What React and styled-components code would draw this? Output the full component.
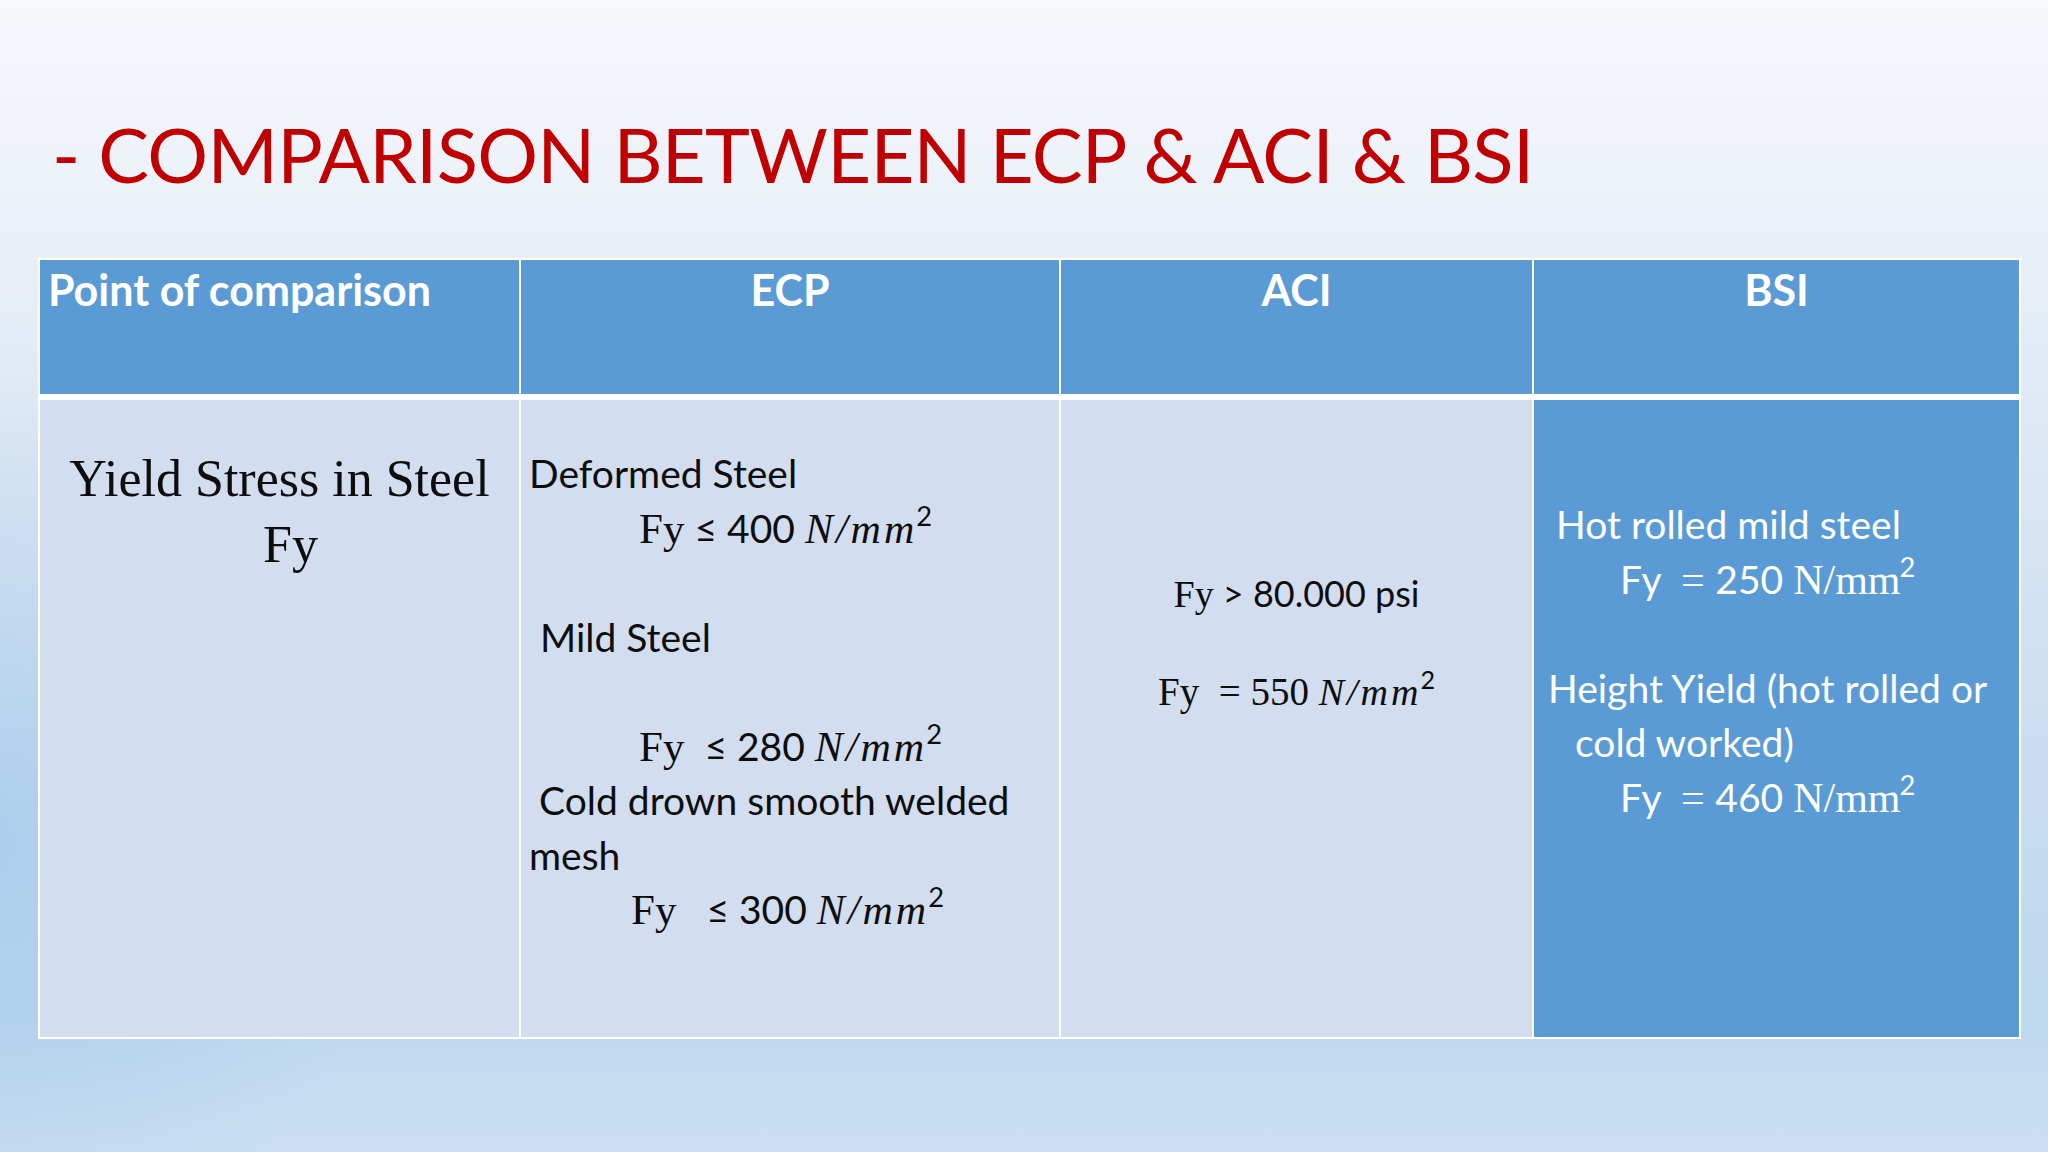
import React from 'react';
import styled, { createGlobalStyle } from 'styled-components';

const Colors = {
  title: '#C00000',
  header: '#5B9BD5',
  cell: '#D2DEEF',
  white: '#fff',
  ink: '#0d0d0d',
};

const Sans = `'Lato', 'Liberation Sans', sans-serif`;
const Serif = `'Liberation Serif', 'DejaVu Serif', serif`;

const GlobalStyle = createGlobalStyle`
  html, body {
    margin: 0;
    padding: 0;
  }
  body {
    background: #dfe9f5;
  }
`;

const Slide = styled.div`
  width: 2048px;
  height: 1152px;
  box-sizing: border-box;
  overflow: hidden;
  display: flex;
  flex-direction: column;
  padding: 116px 0 0 38px;
  background:
    radial-gradient(ellipse 520px 620px at 0% 72%, rgba(150, 194, 232, 0.5), rgba(150, 194, 232, 0) 75%),
    linear-gradient(180deg, #f6f8fc 0%, #eef3f9 14%, #e4ecf6 28%, #d3e2f2 52%, #c3daef 76%, #bed8ee 88%, #cbdff2 100%);
`;

const Title = styled.h1`
  margin: 0 0 66px 14px;
  font-family: ${Sans};
  font-weight: 400;
  font-size: 76px;
  line-height: 76px;
  letter-spacing: -0.7px;
  color: ${Colors.title};
  white-space: nowrap;
`;

const Table = styled.div`
  display: grid;
  grid-template-columns: 479px 538px 471px 485px;
  grid-template-rows: 134px 637px;
  column-gap: 2px;
  row-gap: 6px;
  padding: 2px;
  background: ${Colors.white};
  width: max-content;
`;

const HeadCell = styled.div`
  background: ${Colors.header};
  color: ${Colors.white};
  font-family: ${Sans};
  font-weight: 700;
  font-size: 43px;
  line-height: 48px;
  padding: 6px 8px 0;
  text-align: ${p => p.$align || 'center'};
`;

const BodyCell = styled.div`
  background: ${p => (p.$accent ? Colors.header : Colors.cell)};
  color: ${p => (p.$accent ? Colors.white : Colors.ink)};
  font-family: ${p => (p.$serif ? Serif : Sans)};
  font-size: ${p => p.$size || 39}px;
  padding-top: ${p => p.$top || 0}px;
  text-align: ${p => p.$align || 'left'};
`;

const Line = styled.div`
  height: ${p => p.$h || 54.5}px;
  line-height: ${p => p.$h || 54.5}px;
  padding-left: ${p => p.$indent || 0}px;
  white-space: pre;
`;

const Rm = styled.span`
  font-family: ${Serif};
  font-size: ${p => p.$size || 43}px;
`;

const Var = styled.span`
  font-family: ${Serif};
  font-style: italic;
  font-size: ${p => p.$size || 42}px;
  letter-spacing: 3px;
`;

const Sup = styled.sup`
  font-family: ${Sans};
  font-size: 0.7em;
  line-height: 0;
  vertical-align: 0.62em;
  margin-left: -1px;
`;

const headers = [
  { text: 'Point of comparison', align: 'left' },
  { text: 'ECP' },
  { text: 'ACI' },
  { text: 'BSI' },
];

// "Fy ≤ 400 N/mm²" as drawn by the slide's equation editor
const Limit = ({ gap, value }) => (
  <>
    <Rm>Fy</Rm>
    {gap}≤ {value} <Var>N/mm</Var>
    <Sup>2</Sup>
  </>
);

const Equal = ({ value }) => (
  <>
    Fy <Rm $size={42}> = </Rm>
    {value} <Rm $size={42}>N/mm</Rm>
    <Sup>2</Sup>
  </>
);

export default function App() {
  return (
    <>
      <GlobalStyle />
      <Slide>
        <Title>- COMPARISON BETWEEN ECP &amp; ACI &amp; BSI</Title>
        <Table>
          {headers.map(h => (
            <HeadCell key={h.text} $align={h.align}>
              {h.text}
            </HeadCell>
          ))}

          <BodyCell $serif $size={52} $top={46} $align="center">
            <Line $h={66}>Yield Stress in Steel</Line>
            <Line $h={66} $indent={22}>Fy</Line>
          </BodyCell>

          <BodyCell $top={46}>
            <Line $indent={8}>Deformed Steel</Line>
            <Line $indent={118}>
              <Limit gap=" " value="400" />
            </Line>
            <Line> </Line>
            <Line $indent={19}>Mild Steel</Line>
            <Line> </Line>
            <Line $indent={118}>
              <Limit gap="  " value="280" />
            </Line>
            <Line $indent={18}>Cold drown smooth welded</Line>
            <Line $indent={8}>mesh</Line>
            <Line $indent={110}>
              <Limit gap="   " value="300" />
            </Line>
          </BodyCell>

          <BodyCell $size={36} $top={169} $align="center">
            <Line $h={49}>
              <Rm $size={38}>Fy</Rm> &gt; 80.000 psi
            </Line>
            <Line $h={49}> </Line>
            <Line $h={49}>
              <Rm $size={39}>Fy  = 550 </Rm>
              <Var $size={38}>N/mm</Var>
              <Sup>2</Sup>
            </Line>
          </BodyCell>

          <BodyCell $accent $top={97}>
            <Line $indent={22}>Hot rolled mild steel</Line>
            <Line $indent={86}>
              <Equal value="250" />
            </Line>
            <Line> </Line>
            <Line $indent={14}>Height Yield (hot rolled or</Line>
            <Line $indent={41}>cold worked)</Line>
            <Line $indent={86}>
              <Equal value="460" />
            </Line>
          </BodyCell>
        </Table>
      </Slide>
    </>
  );
}
